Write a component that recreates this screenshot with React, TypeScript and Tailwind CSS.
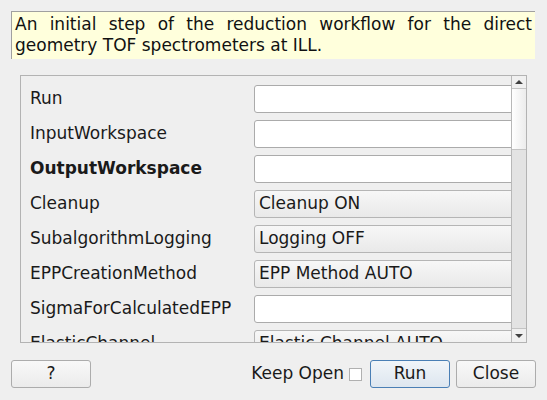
// диалог алгоритма - описание, список свойств, кнопки
const font = { fontFamily: '"DejaVu Sans", "Liberation Sans", sans-serif' }

type Prop = { name: string; kind: 'edit' | 'combo'; value?: string; bold?: boolean }

const props: Prop[] = [
	{ name: 'Run', kind: 'edit' },
	{ name: 'InputWorkspace', kind: 'edit' },
	{ name: 'OutputWorkspace', kind: 'edit', bold: true },
	{ name: 'Cleanup', kind: 'combo', value: 'Cleanup ON' },
	{ name: 'SubalgorithmLogging', kind: 'combo', value: 'Logging OFF' },
	{ name: 'EPPCreationMethod', kind: 'combo', value: 'EPP Method AUTO' },
	{ name: 'SigmaForCalculatedEPP', kind: 'edit' },
	{ name: 'ElasticChannel', kind: 'combo', value: 'Elastic Channel AUTO' },
]

function Row({ p }: { p: Prop }) {
	return (
		<div className="flex flex-row items-center h-[28px] shrink-0">
			<div className={`w-[224px] shrink-0 text-[#1a1a1a] whitespace-nowrap ${p.bold ? 'font-bold' : ''}`}>{p.name}</div>
			{p.kind === 'edit' ? (
				<div className="w-[264px] shrink-0 h-[28px] bg-white border border-[#ababab] rounded-[3px]" />
			) : (
				<div className="w-[264px] shrink-0 h-[28px] border border-[#b5b5b5] rounded-[3px] bg-gradient-to-b from-[#f7f7f7] to-[#e9e9e9] flex items-center pl-[4px] text-[#1a1a1a] whitespace-nowrap">
					{p.value}
				</div>
			)}
		</div>
	)
}

export default function App() {
	return (
		<div className="w-[547px] h-[400px] bg-[#efefef] flex flex-col pt-[11px] text-[17px]" style={font}>
			{/* описание */}
			<div className="ml-[11px] w-[524px] h-[48px] shrink-0 bg-[#ffffdc] border-t border-l border-[#a0a0a0] pl-[3px] pr-[3px] pt-[2px] leading-[21px] text-justify text-[#111]">
				An initial step of the reduction workflow for the direct geometry TOF spectrometers at ILL.
			</div>

			{/* свойства */}
			<div className="ml-[20px] mt-[16px] w-[507px] h-[268px] shrink-0 border border-[#b3b3b3] flex flex-row">
				<div className="flex-1 overflow-hidden pl-[9px] pt-[9px] flex flex-col gap-[7px]">
					{props.map((p) => (
						<Row key={p.name} p={p} />
					))}
				</div>
				<div className="w-[15px] shrink-0 border-l border-[#b8b8b8] flex flex-col bg-[#e3e3e3]">
					<div className="h-[13px] bg-[#f0f0f0] border-b border-[#c4c4c4] flex items-center justify-center">
						<div className="w-0 h-0 border-l-[4px] border-r-[4px] border-b-[4px] border-l-transparent border-r-transparent border-b-[#404040]" />
					</div>
					<div className="h-[61px] bg-gradient-to-r from-[#ffffff] to-[#ececec] border-b border-[#c4c4c4]" />
					<div className="flex-1" />
					<div className="h-[14px] bg-[#f0f0f0] border-t border-[#c4c4c4] flex items-center justify-center">
						<div className="w-0 h-0 border-l-[4px] border-r-[4px] border-t-[4px] border-l-transparent border-r-transparent border-t-[#404040]" />
					</div>
				</div>
			</div>

			{/* кнопки */}
			<div className="mt-[17px] px-[11px] flex flex-row items-center">
				<button className="w-[80px] h-[28px] border border-[#acacac] rounded-[3px] bg-gradient-to-b from-[#f8f8f8] to-[#ebebeb] text-[#1a1a1a]">?</button>
				<div className="ml-auto text-[#1a1a1a]">Keep Open</div>
				<div className="ml-[5px] w-[13px] h-[13px] bg-white border border-[#b0b0b0]" />
				<button className="ml-[8px] w-[80px] h-[28px] border border-[#4a7fb5] rounded-[3px] bg-gradient-to-b from-[#f1f5f9] to-[#dde6ef] text-[#1a1a1a]">Run</button>
				<button className="ml-[6px] w-[80px] h-[28px] border border-[#acacac] rounded-[3px] bg-gradient-to-b from-[#f8f8f8] to-[#ebebeb] text-[#1a1a1a]">Close</button>
			</div>
		</div>
	)
}
